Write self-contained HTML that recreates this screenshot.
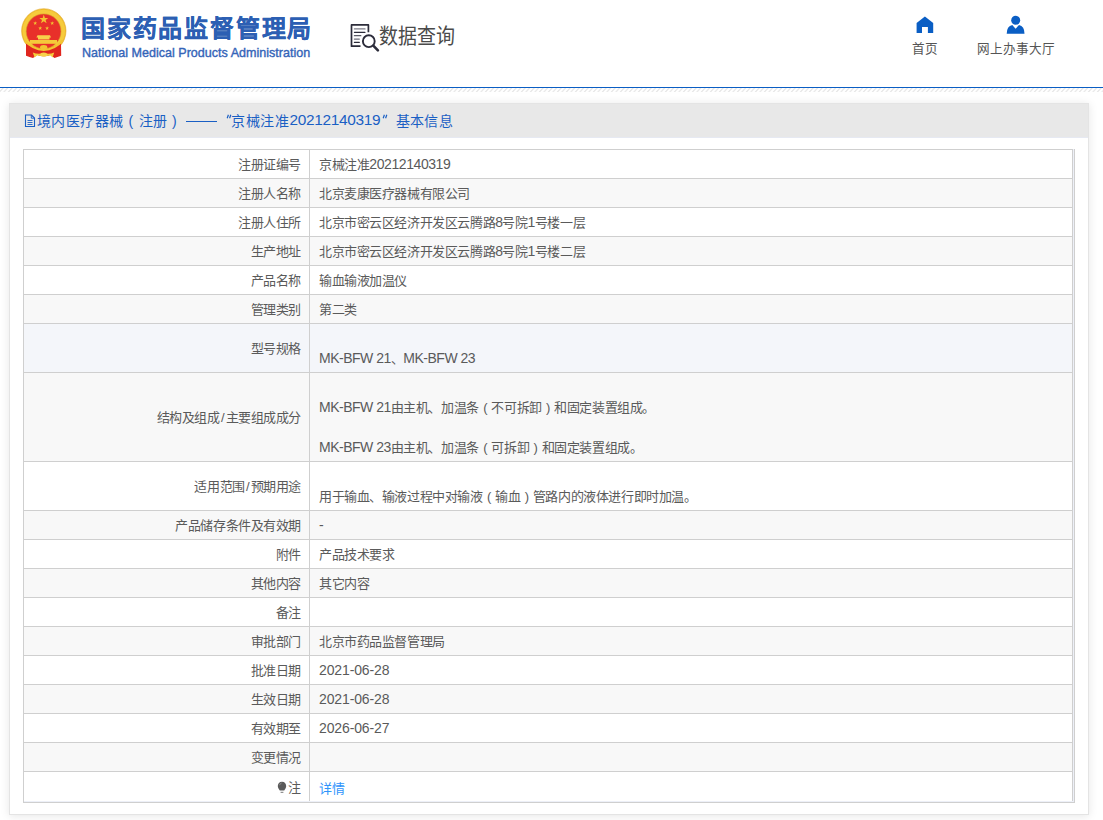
<!DOCTYPE html>
<html lang="zh-CN">
<head>
<meta charset="utf-8">
<style>
*{box-sizing:border-box;}
html,body{margin:0;padding:0;background:#fff;width:1103px;height:820px;overflow:hidden;font-family:"Liberation Sans",sans-serif;}
.abs{position:absolute;white-space:nowrap;}
#blueline{position:absolute;left:0;top:87px;width:1103px;height:1px;background:#0a5ec4;}
.title{left:81px;top:12px;font-size:24px;font-weight:bold;color:#2c5fb3;letter-spacing:1.8px;line-height:34px;-webkit-text-stroke:0.2px #2c5fb3;}
.eng{left:82px;top:45px;font-size:13.5px;color:#3464b8;line-height:16px;transform:scaleX(0.93);transform-origin:0 0;-webkit-text-stroke:0.4px #3464b8;}
.sj{left:379px;top:20px;font-size:19px;color:#4a4a4a;line-height:30px;transform:scaleY(1.1);transform-origin:0 6px;}
.nav{top:40px;font-size:12.6px;color:#555;line-height:18px;}
#panel{position:absolute;left:9px;top:103px;width:1080px;height:712px;background:#fff;border:1px solid #e4e4e4;box-shadow:0 1px 9px rgba(0,0,0,0.10);}
#ph{position:absolute;left:0;top:0;width:1078px;height:34px;background:#e8e8e8;border-bottom:1px solid #e6e9f2;}
.ht{position:absolute;top:8px;font-size:14px;letter-spacing:0.4px;color:#1a5fc4;white-space:nowrap;line-height:18px;}
#tw{position:absolute;left:23px;top:149px;width:1052px;height:654px;background:#edf0f8;border-right:1px solid #cfcfcf;border-bottom:1px solid #cfcfcf;}
table{position:absolute;left:0;top:0;border-collapse:separate;border-spacing:0;width:1050px;table-layout:fixed;}
td{border-top:1px solid #cfcfcf;border-left:1px solid #cfcfcf;font-size:13px;letter-spacing:-0.42px;color:#5a5a5a;padding:2px 0 0 0;line-height:20px;background:#fff;}
td.v{border-right:1px solid #cfcfcf;padding-left:9px;}
td.l{text-align:right;padding-right:8px;}
tr{height:29px;}
tr.g td{background:#f8f8f8;}
tr.b td{background:#f4f6fa;}
.n{font-size:14px;letter-spacing:-0.5px;line-height:0;}
.sl{margin:0 1.4px;}
.pp{display:inline-block;width:12.58px;text-align:center;}
</style>
</head>
<body>
<!-- emblem -->
<svg class="abs" style="left:16px;top:4px" width="56" height="60" viewBox="16 4 56 60">
  <circle cx="43.8" cy="30.9" r="22.2" fill="#f0bd2c" stroke="#e2a828" stroke-width="0.6"/>
  <circle cx="43.8" cy="30.9" r="21.2" fill="#f6cb3c"/>
  <circle cx="43.6" cy="31.3" r="17.4" fill="#e8302a" stroke="#d99a26" stroke-width="0.6"/>
  <polygon points="43.8,14.6 44.9,17.9 48.3,17.9 45.6,19.9 46.6,23.2 43.8,21.2 41.0,23.2 42.0,19.9 39.3,17.9 42.7,17.9" fill="#f3c431"/>
  <polygon points="35.2,21.3 35.7,22.6 37.1,22.6 36.0,23.5 36.4,24.9 35.2,24.0 34.0,24.9 34.4,23.5 33.3,22.6 34.7,22.6" fill="#f3c431"/>
  <polygon points="52.2,21.3 52.7,22.6 54.1,22.6 53.0,23.5 53.4,24.9 52.2,24.0 51.0,24.9 51.4,23.5 50.3,22.6 51.7,22.6" fill="#f3c431"/>
  <polygon points="40.2,26.3 40.7,27.6 42.1,27.6 41.0,28.5 41.4,29.9 40.2,29.0 39.0,29.9 39.4,28.5 38.3,27.6 39.7,27.6" fill="#f3c431"/>
  <polygon points="47.1,26.3 47.6,27.6 49.0,27.6 47.9,28.5 48.3,29.9 47.1,29.0 45.9,29.9 46.3,28.5 45.2,27.6 46.6,27.6" fill="#f3c431"/>
  <path d="M37.5 35.2 H50 L51 37.6 H49.5 V39.6 H38 V37.6 H36.4 Z" fill="#f7d24a"/>
  <path d="M30 40 H57 V43.8 H30 Z" fill="#f5c93a"/>
  <path d="M26 43.5 Q35 46.5 43.7 50.5 Q52.5 46.5 61 43.5 L61.2 55.8 Q57 57.2 54.5 58 L50.5 55 Q44 57.6 37 55 L33 58 Q29.5 57.2 26 55.8 Z" fill="#e0261f"/>
  <path d="M24.5 40.5 Q33 49.5 43.7 50 Q54.5 49.5 62.8 40.5" fill="none" stroke="#f3c431" stroke-width="2.2"/>
  <ellipse cx="43.7" cy="47.3" rx="3.6" ry="2.4" fill="#f3c431"/>
  <path d="M32.8 52.4 Q38 54.8 43.7 53 Q49.5 54.8 54.2 52.4 L52.6 57.6 L50.2 55.3 Q44 57.2 37.2 55.3 L34.6 57.6 Z" fill="#f5cc3a"/>
  <ellipse cx="43.7" cy="54.6" rx="3.4" ry="2" fill="#f7d24a"/>
</svg>
<div class="abs title">国家药品监督管理局</div>
<div class="abs eng">National Medical Products Administration</div>
<!-- data query icon -->
<svg class="abs" style="left:348px;top:22px" width="34" height="32" viewBox="348 22 34 32">
  <path d="M368.4 32.2 V24.9 H351.5 V46.2 H360.5" fill="none" stroke="#2c2c3a" stroke-width="1.7" stroke-linejoin="round"/>
  <path d="M354.4 28.9 H365" stroke="#7c7c88" stroke-width="1.3" stroke-linecap="round"/>
  <path d="M354.4 32.3 H365" stroke="#2c2c3a" stroke-width="1.2" stroke-linecap="round"/>
  <path d="M354.4 35.7 H360.8" stroke="#5c5c68" stroke-width="1.3" stroke-linecap="round"/>
  <path d="M354.4 39.1 H359.3" stroke="#6c6c78" stroke-width="1.3" stroke-linecap="round"/>
  <path d="M354.4 42.4 H359.3" stroke="#2c2c3a" stroke-width="1.2" stroke-linecap="round"/>
  <circle cx="368.8" cy="41.2" r="5.9" fill="#fff" stroke="#2c2c3a" stroke-width="1.9"/>
  <path d="M373.3 45.7 L377.9 50.3" stroke="#2c2c3a" stroke-width="2.6" stroke-linecap="round"/>
</svg>
<div class="abs sj">数据查询</div>
<!-- home icon -->
<svg class="abs" style="left:916px;top:16px" width="18" height="18" viewBox="916 16 18 18">
  <path d="M916.6 23.1 L924.9 16.4 L933.2 23.1 V32.9 H927.9 V27.1 H922 V32.9 H916.6 Z" fill="#0a5ec4"/>
</svg>
<div class="abs nav" style="left:912px">首页</div>
<!-- user icon -->
<svg class="abs" style="left:1005px;top:14px" width="22" height="22" viewBox="1005 14 22 22">
  <circle cx="1015.7" cy="20.2" r="4.5" fill="#0a5ec4"/>
  <path d="M1006.7 33.7 Q1006.7 26.5 1012.3 25.1 L1015.6 28.8 L1019 25.1 Q1024.5 26.5 1024.5 33.7 Z" fill="#0a5ec4"/>
</svg>
<div class="abs nav" style="left:977px">网上办事大厅</div>

<div id="blueline"></div>
<svg class="abs" style="left:0;top:88px" width="1103" height="4"><defs><pattern id="hp" patternUnits="userSpaceOnUse" width="4.5" height="4"><path d="M-1 4.5 L3.5 -0.5 M3.5 4.5 L8 -0.5" stroke="#e4e4e4" stroke-width="1.1"/></pattern></defs><rect width="1103" height="4" fill="url(#hp)"/></svg>

<div id="panel">
  <div id="ph">
    <svg class="abs" style="left:14px;top:10px" width="12" height="14" viewBox="0 0 12 14">
      <path d="M1.5 1 H7.5 L10.5 4 V12.5 H1.5 Z" fill="none" stroke="#1a5fc4" stroke-width="1.1"/>
      <path d="M7.3 1.2 V4.2 H10.3" fill="none" stroke="#1a5fc4" stroke-width="0.9"/>
      <path d="M3.5 6.5 H8.5 M3.5 8.5 H8.5 M3.5 10.5 H8.5" stroke="#1a5fc4" stroke-width="0.9"/>
    </svg>
    <span class="ht" style="left:27px">境内医疗器械</span>
    <span class="ht" style="left:118.5px">(</span>
    <span class="ht" style="left:128.8px">注册</span>
    <span class="ht" style="left:162px">)</span>
    <div class="abs" style="left:176px;top:17px;width:31px;height:1px;background:#1a5fc4"></div>
    <svg class="abs" style="left:216px;top:10px" width="6" height="5" viewBox="0 0 6 5"><path d="M1.2 4.2 L2.4 0.8 M3.6 4.2 L4.8 0.8" stroke="#1a5fc4" stroke-width="1.2"/></svg>
    <span class="ht" style="left:221.4px">京械注准</span>
    <span class="ht" style="left:279.5px;top:7px;font-size:15.4px;letter-spacing:-0.3px">20212140319</span>
    <svg class="abs" style="left:372px;top:10px" width="6" height="5" viewBox="0 0 6 5"><path d="M1.2 4.2 L2.4 0.8 M3.6 4.2 L4.8 0.8" stroke="#1a5fc4" stroke-width="1.2"/></svg>
    <span class="ht" style="left:385.5px">基本信息</span>
  </div>
</div>

<div id="tw">
  <div style="position:absolute;left:0;top:652px;width:1px;height:1px;background:#cfcfcf"></div>
  <table>
    <colgroup><col style="width:286px"><col style="width:764px"></colgroup>
    <tr><td class="l">注册证编号</td><td class="v">京械注准<span class="n" style="letter-spacing:-0.42px">20212140319</span></td></tr>
    <tr class="g"><td class="l">注册人名称</td><td class="v">北京麦康医疗器械有限公司</td></tr>
    <tr><td class="l">注册人住所</td><td class="v">北京市密云区经济开发区云腾路<span class="n">8</span>号院<span class="n">1</span>号楼一层</td></tr>
    <tr class="g"><td class="l">生产地址</td><td class="v">北京市密云区经济开发区云腾路<span class="n">8</span>号院<span class="n">1</span>号楼二层</td></tr>
    <tr><td class="l">产品名称</td><td class="v">输血输液加温仪</td></tr>
    <tr class="g"><td class="l">管理类别</td><td class="v">第二类</td></tr>
    <tr class="b" style="height:49px"><td class="l">型号规格</td><td class="v"><br><span class="n">MK-BFW 21</span>、<span class="n">MK-BFW 23</span></td></tr>
    <tr class="g" style="height:89px"><td class="l">结构及组成<span class="sl">/</span>主要组成成分</td><td class="v"><br><span class="n">MK-BFW 21</span>由主机、加温条<span class="pp">(</span>不可拆卸<span class="pp">)</span>和固定装置组成。<br><br><span class="n">MK-BFW 23</span>由主机、加温条<span class="pp">(</span>可拆卸<span class="pp">)</span>和固定装置组成。</td></tr>
    <tr style="height:49px"><td class="l">适用范围<span class="sl">/</span>预期用途</td><td class="v"><br>用于输血、输液过程中对输液<span class="pp">(</span>输血<span class="pp">)</span>管路内的液体进行即时加温。</td></tr>
    <tr class="g"><td class="l">产品储存条件及有效期</td><td class="v"><span class="n">-</span></td></tr>
    <tr><td class="l">附件</td><td class="v">产品技术要求</td></tr>
    <tr class="g"><td class="l">其他内容</td><td class="v">其它内容</td></tr>
    <tr><td class="l">备注</td><td class="v"></td></tr>
    <tr class="g"><td class="l">审批部门</td><td class="v">北京市药品监督管理局</td></tr>
    <tr><td class="l">批准日期</td><td class="v"><span class="n" style="letter-spacing:-0.12px">2021-06-28</span></td></tr>
    <tr class="g"><td class="l">生效日期</td><td class="v"><span class="n" style="letter-spacing:-0.12px">2021-06-28</span></td></tr>
    <tr><td class="l">有效期至</td><td class="v"><span class="n" style="letter-spacing:-0.12px">2026-06-27</span></td></tr>
    <tr class="g"><td class="l">变更情况</td><td class="v"></td></tr>
    <tr style="height:30px"><td class="l"><svg width="10" height="13" viewBox="0 0 10 13" style="vertical-align:-2px;margin-right:1.5px"><path d="M5 0.8 C7.6 0.8 9.2 2.8 9.2 5.1 C9.2 7 8 8.2 7.2 9.6 H2.8 C2 8.2 0.8 7 0.8 5.1 C0.8 2.8 2.4 0.8 5 0.8 Z" fill="#5a5a5a"/><path d="M2.5 4.2 Q3 2.5 4.6 2" stroke="#9a9a9a" stroke-width="0.8" fill="none"/><path d="M3.6 11.3 H6.4" stroke="#777" stroke-width="1"/></svg>注</td><td class="v"><span style="color:#2f94fb;position:relative;top:1.5px">详情</span></td></tr>
  </table>
</div>
</body>
</html>
